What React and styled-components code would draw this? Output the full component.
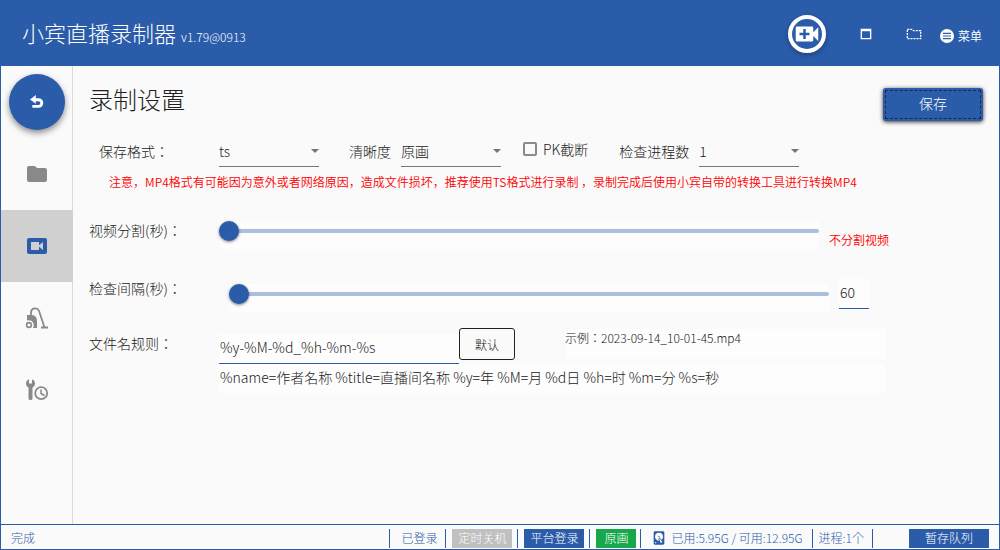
import React, {useState} from 'react';
import styled, {createGlobalStyle} from 'styled-components';

const BLUE = '#2a5caa';

const GlobalStyle = createGlobalStyle`
  * {
    box-sizing: border-box;
  }

  body {
    margin: 0;
    background: #fafafa;
  }

  body,
  button,
  input,
  select {
    font-family: 'Noto Sans CJK JP', 'Noto Sans CJK SC', sans-serif;
    font-weight: 300;
    color: #212121;
  }
`;

const Window = styled.div`
  min-height: 100vh;
  display: flex;
  flex-direction: column;
  border: 1px solid ${BLUE};
  border-top: 0;
`;

const Header = styled.header`
  height: 66px;
  padding: 2px 17px 0 21px;
  display: flex;
  align-items: center;
  justify-content: space-between;
  background: ${BLUE};
  color: #fff;
`;

const AppTitle = styled.h1`
  margin: 0;
  font-size: 22px;
  font-weight: 300;
  line-height: 32px;
  white-space: nowrap;
`;

const Version = styled.small`
  margin-left: 5px;
  font-size: 12px;
`;

const HeaderActions = styled.div`
  display: flex;
  align-items: center;
`;

const IconButton = styled.button`
  padding: 0;
  border: 0;
  display: flex;
  align-items: center;
  gap: 4px;
  background: transparent;
  color: #fff;
  font-size: 12px;
  font-weight: 350;
  line-height: 16px;
  margin-left: ${(props) => props.$space || 0}px;
`;

const RecordButton = styled(IconButton)`
  width: 38px;
  height: 38px;
  justify-content: center;
  border: 4px solid #fff;
  border-radius: 50%;
  box-shadow: 0 2px 5px rgba(0, 0, 0, 0.3);
`;

const MenuButton = styled(IconButton)`
  padding-top: 4px;
`;

const Body = styled.div`
  flex: 1;
  display: flex;
`;

const Sidebar = styled.nav`
  width: 72px;
  flex: none;
  padding-top: 8px;
  border-right: 1px solid #dadada;
`;

const BackButton = styled.button`
  width: 56px;
  height: 56px;
  margin: 0 8px 8px;
  padding: 0;
  border: 0;
  border-radius: 50%;
  display: flex;
  align-items: center;
  justify-content: center;
  background: ${BLUE};
  color: #fff;
  box-shadow: 0 3px 6px rgba(0, 0, 0, 0.45);
`;

const NavButton = styled.button`
  width: 72px;
  height: 72px;
  padding: 0;
  border: 0;
  display: flex;
  align-items: center;
  justify-content: center;
  background: ${(props) => (props.$active ? '#d0d0d0' : 'transparent')};
  color: ${(props) => (props.$active ? BLUE : '#898989')};
`;

const Main = styled.main`
  flex: 1;
  min-width: 0;
  padding: 16px;
`;

const TitleRow = styled.div`
  display: flex;
  align-items: flex-start;
  justify-content: space-between;
  height: 40px;
`;

const PageTitle = styled.h2`
  margin: 0;
  font-size: 24px;
  font-weight: 300;
  line-height: 34px;
`;

const SaveButton = styled.button`
  width: 100px;
  height: 33px;
  margin-top: 6px;
  padding: 0 0 4px;
  border: 0;
  border-radius: 3px;
  background: ${BLUE};
  color: #fff;
  font-size: 14px;
  outline: 1px dashed #1b2a44;
  outline-offset: -3px;
  box-shadow: 0 1px 4px rgba(0, 0, 0, 0.8);
`;

const FormatRow = styled.div`
  display: flex;
  height: 30px;
  margin-top: 15px;
  padding-left: 10px;
  font-size: 14px;
  line-height: 28px;
  white-space: nowrap;
`;

const Label = styled.label`
  width: ${(props) => props.$width || 130}px;
  flex: none;
  font-size: 14px;
  line-height: 18px;
`;

const FormatLabel = styled(Label)`
  line-height: 28px;
`;

const SelectBox = styled.div`
  position: relative;
  width: 100px;
  margin-right: 30px;
  border-bottom: 1px solid #767676;

  &::after {
    content: '';
    position: absolute;
    right: 0;
    top: 12px;
    border: 4px solid transparent;
    border-top-color: #757575;
    border-bottom: 0;
    pointer-events: none;
  }
`;

const Select = styled.select`
  width: 100%;
  height: 26px;
  padding: 0;
  border: 0;
  appearance: none;
  background: transparent;
  font-size: 14px;
`;

const CheckLabel = styled.label`
  display: flex;
  align-items: center;
  gap: 6px;
  height: 24px;
  margin: 0 31px 0 -8px;
`;

const Checkbox = styled.input`
  width: 14px;
  height: 14px;
  margin: 0;
  appearance: none;
  border: 2px solid #8a8a8a;
  border-radius: 2px;

  &:checked {
    background: ${BLUE};
    border-color: ${BLUE};
  }
`;

const Warning = styled.p`
  margin: 6px 0 30px;
  padding-left: 20px;
  color: #f00;
  font-size: 12px;
  font-weight: 350;
  line-height: 18px;
`;

const SliderRow = styled.div`
  display: flex;
  align-items: flex-start;
  height: ${(props) => props.$height}px;
`;

const Slider = styled.input`
  width: 600px;
  height: 28px;
  margin: ${(props) => (props.$indent ? '5px 0 0 10px' : 0)};
  padding-bottom: 8px;
  flex: 0 1 auto;
  appearance: none;
  background: #fdfdfd;

  &::-webkit-slider-runnable-track {
    height: 4px;
    border-radius: 2px;
    background: #aabfde;
  }

  &::-webkit-slider-thumb {
    appearance: none;
    width: 20px;
    height: 20px;
    margin-top: -8px;
    border-radius: 50%;
    background: ${BLUE};
    box-shadow: 0 1px 3px rgba(0, 0, 0, 0.5);
  }
`;

const SplitNote = styled.output`
  margin: 10px 0 0 10px;
  color: #f00;
  font-size: 12px;
  font-weight: 350;
  line-height: 18px;
  white-space: nowrap;
`;

const TextInput = styled.input`
  width: ${(props) => props.$width}px;
  height: 30px;
  padding: 0 1px 4px;
  border: 0;
  border-bottom: 1px solid ${BLUE};
  background: #fdfdfd;
  font-size: 14px;
`;

const IntervalInput = styled(TextInput)`
  margin-left: 10px;
`;

const RuleRow = styled.div`
  display: flex;
  align-items: flex-end;
  height: 36px;
`;

const RuleLabel = styled(Label)`
  align-self: flex-start;
  padding-top: 6px;
`;

const DefaultButton = styled.button`
  align-self: flex-start;
  width: 56px;
  height: 32px;
  padding: 0;
  border: 1px solid #212121;
  border-radius: 3px;
  background: #fafafa;
  font-size: 12px;
`;

const Example = styled.div`
  align-self: flex-start;
  width: 320px;
  height: 30px;
  margin: 1px 0 0 50px;
  background: #fdfdfd;
  font-size: 12px;
  line-height: 18px;
  white-space: nowrap;
`;

const RuleHelp = styled.p`
  max-width: 666px;
  margin: 0 0 0 130px;
  padding: 0 0 3px 1px;
  background: #fdfdfd;
  font-size: 14px;
  line-height: 26px;
`;

const StatusBar = styled.footer`
  display: flex;
  align-items: center;
  height: 25px;
  padding: 2px 10px 0;
  border-top: 1px solid ${BLUE};
  color: ${BLUE};
  font-size: 12px;
  line-height: 18px;
  white-space: nowrap;
`;

const StatusText = styled.span`
  margin-right: auto;
`;

const StatusCell = styled.div`
  display: flex;
  align-items: center;
  gap: 4px;
  height: 19px;
  padding: 0 ${(props) => props.$right ?? 5}px 0 ${(props) => props.$left ?? 6}px;
  border-left: 1px solid ${BLUE};
`;

const StatusButton = styled.button`
  width: ${(props) => props.$width || 60}px;
  height: 19px;
  padding: 0;
  border: 0;
  background: ${(props) => props.$color || BLUE};
  color: #fff;
  font-size: 12px;
  line-height: 18px;
`;

function Icon({size = 24, d, children}) {
  return (
    <svg
      width={size}
      height={size}
      viewBox="0 0 24 24"
      fill="currentColor"
      aria-hidden="true">
      {d && <path d={d} />}
      {children}
    </svg>
  );
}

const icons = {
  videoPlus:
    'M17,10.5V7A1,1 0 0,0 16,6H4A1,1 0 0,0 3,7V17A1,1 0 0,0 4,18H16A1,1 0 0,0 17,17V13.5L21,17.5V6.5L17,10.5M14,13H11V16H9V13H6V11H9V8H11V11H14V13Z',
  maximize: 'M4,4H20V20H4V4M6,8V18H18V8H6Z',
  folder:
    'M10,4H4C2.89,4 2,4.89 2,6V18A2,2 0 0,0 4,20H20A2,2 0 0,0 22,18V8C22,6.89 21.1,6 20,6H12L10,4Z',
  videoBox:
    'M18,16L14,12.8V16H6V8H14V11.2L18,8M20,4H4A2,2 0 0,0 2,6V18A2,2 0 0,0 4,20H20A2,2 0 0,0 22,18V6A2,2 0 0,0 20,4Z',
  harddisk:
    'M6,2H18A2,2 0 0,1 20,4V20A2,2 0 0,1 18,22H6A2,2 0 0,1 4,20V4A2,2 0 0,1 6,2M12,4A6,6 0 0,0 6,10C6,13.31 8.69,16 12.1,16L11.22,13.77C10.95,13.29 11.11,12.68 11.59,12.4L12.45,11.9C12.93,11.63 13.54,11.79 13.82,12.27L15.74,14.69C17.12,13.59 18,11.9 18,10A6,6 0 0,0 12,4M12,9A1,1 0 0,1 13,10A1,1 0 0,1 12,11A1,1 0 0,1 11,10A1,1 0 0,1 12,9M7,18A1,1 0 0,0 6,19A1,1 0 0,0 7,20A1,1 0 0,0 8,19A1,1 0 0,0 7,18M12.09,13.27L14.58,19.58L17.17,18.08L12.95,12.77L12.09,13.27Z',
  wrench:
    'M4 1.2V5.5H7V1.2C8.8 1.9 10 3.4 10 5.4C10 7.2 9 8.6 7.5 9.4V20.5Q7.5 22 5.5 22Q3.5 22 3.5 20.5V9.4C2 8.6 1 7.2 1 5.4C1 3.4 2.2 1.9 4 1.2Z',
};

function TopBar() {
  return (
    <Header>
      <AppTitle>
        小宾直播录制器
        <Version>v1.79@0913</Version>
      </AppTitle>
      <HeaderActions>
        <RecordButton aria-label="添加录制">
          <Icon size={30} d={icons.videoPlus} />
        </RecordButton>
        <IconButton $space={32} aria-label="最大化">
          <Icon size={16} d={icons.maximize} />
        </IconButton>
        <IconButton $space={32} aria-label="打开文件夹">
          <Icon size={16}>
            <path
              d="M2 5H9L11 7H22V19H2Z"
              fill="none"
              stroke="currentColor"
              strokeWidth="2"
              strokeDasharray="3 1.5"
            />
          </Icon>
        </IconButton>
        <MenuButton $space={18}>
          <Icon size={14}>
            <circle cx="12" cy="12" r="12" />
            <path d="M5 7.5H19M5 12H19M5 16.5H19" stroke={BLUE} strokeWidth="2" />
          </Icon>
          菜单
        </MenuButton>
      </HeaderActions>
    </Header>
  );
}

function SideNav() {
  return (
    <Sidebar>
      <BackButton aria-label="返回">
        <Icon size={14}>
          <path d="M10 0V15L0 7.5Z" />
          <path
            d="M8 8H14.5A5.5 5.5 0 0 1 14.5 19.5H4"
            fill="none"
            stroke="currentColor"
            strokeWidth="5"
          />
        </Icon>
      </BackButton>
      <NavButton aria-label="文件">
        <Icon d={icons.folder} />
      </NavButton>
      <NavButton $active aria-label="录制设置">
        <Icon d={icons.videoBox} />
      </NavButton>
      <NavButton aria-label="清理">
        <Icon>
          <g fill="none" stroke="currentColor">
            <circle cx="4" cy="19" r="2.4" strokeWidth="1.6" />
            <path
              d="M6 10V6.5A4.2 4.2 0 0 1 14 4.8L19.5 21.5"
              strokeWidth="1.8"
            />
            <path d="M16 21.5H23" strokeWidth="2" />
          </g>
          <path d="M2 9H7.5Q12 10 12 15V22H8Q10 18 7 15.2Q4.8 13.6 2 14.6Z" />
        </Icon>
      </NavButton>
      <NavButton aria-label="工具">
        <Icon d={icons.wrench}>
          <g fill="none" stroke="currentColor">
            <circle cx="16.2" cy="15.2" r="6" strokeWidth="1.8" />
            <path d="M16 11.5V15.5L19.5 17.5" strokeWidth="1.5" />
          </g>
        </Icon>
      </NavButton>
    </Sidebar>
  );
}

function SelectField({id, value, options}) {
  return (
    <SelectBox>
      <Select id={id} defaultValue={value}>
        {options.map((option) => (
          <option key={option}>{option}</option>
        ))}
      </Select>
    </SelectBox>
  );
}

function Settings() {
  const [split, setSplit] = useState(0);
  const [interval, setInterval] = useState(60);
  const [rule, setRule] = useState('%y-%M-%d_%h-%m-%s');

  return (
    <Main>
      <TitleRow>
        <PageTitle>录制设置</PageTitle>
        <SaveButton>保存</SaveButton>
      </TitleRow>
      <FormatRow>
        <FormatLabel htmlFor="format" $width={120}>
          保存格式：
        </FormatLabel>
        <SelectField id="format" value="ts" options={['ts', 'mp4', 'flv']} />
        <FormatLabel htmlFor="quality" $width={52}>
          清晰度
        </FormatLabel>
        <SelectField id="quality" value="原画" options={['原画', '高清']} />
        <CheckLabel>
          <Checkbox type="checkbox" />
          PK截断
        </CheckLabel>
        <FormatLabel htmlFor="process" $width={80}>
          检查进程数
        </FormatLabel>
        <SelectField id="process" value="1" options={['1', '2', '3']} />
      </FormatRow>
      <Warning>
        注意，MP4格式有可能因为意外或者网络原因，造成文件损坏，推荐使用TS格式进行录制
        ，录制完成后使用小宾自带的转换工具进行转换MP4
      </Warning>
      <SliderRow $height={58}>
        <Label htmlFor="split">视频分割(秒)：</Label>
        <Slider
          id="split"
          type="range"
          min="0"
          max="7200"
          value={split}
          onChange={(e) => setSplit(Number(e.target.value))}
        />
        <SplitNote htmlFor="split">
          {split === 0 ? '不分割视频' : `${split}秒`}
        </SplitNote>
      </SliderRow>
      <SliderRow $height={49}>
        <Label htmlFor="interval">检查间隔(秒)：</Label>
        <Slider
          id="interval"
          type="range"
          min="60"
          max="3600"
          $indent
          value={interval}
          onChange={(e) => setInterval(Number(e.target.value))}
        />
        <IntervalInput
          $width={30}
          aria-label="检查间隔"
          value={interval}
          onChange={(e) => setInterval(Number(e.target.value) || 60)}
        />
      </SliderRow>
      <RuleRow>
        <RuleLabel htmlFor="rule">文件名规则：</RuleLabel>
        <TextInput
          id="rule"
          $width={240}
          value={rule}
          onChange={(e) => setRule(e.target.value)}
        />
        <DefaultButton onClick={() => setRule('%y-%M-%d_%h-%m-%s')}>
          默认
        </DefaultButton>
        <Example>示例：2023-09-14_10-01-45.mp4</Example>
      </RuleRow>
      <RuleHelp>
        %name=作者名称 %title=直播间名称 %y=年 %M=月 %d日 %h=时 %m=分 %s=秒
      </RuleHelp>
    </Main>
  );
}

export default function App() {
  return (
    <Window>
      <GlobalStyle />
      <TopBar />
      <Body>
        <SideNav />
        <Settings />
      </Body>
      <StatusBar>
        <StatusText>完成</StatusText>
        <StatusCell $left={11} $right={8}>
          已登录
        </StatusCell>
        <StatusCell>
          <StatusButton $color="#c0c0c0">定时关机</StatusButton>
        </StatusCell>
        <StatusCell>
          <StatusButton>平台登录</StatusButton>
        </StatusCell>
        <StatusCell $right={4}>
          <StatusButton $color="#16a84a" $width={40}>
            原画
          </StatusButton>
        </StatusCell>
        <StatusCell $left={10} $right={9}>
          <Icon size={16} d={icons.harddisk} />
          已用:5.95G / 可用:12.95G
        </StatusCell>
        <StatusCell $right={8}>进程:1个</StatusCell>
        <StatusCell $left={36} $right={0}>
          <StatusButton $width={80}>暂存队列</StatusButton>
        </StatusCell>
      </StatusBar>
    </Window>
  );
}
